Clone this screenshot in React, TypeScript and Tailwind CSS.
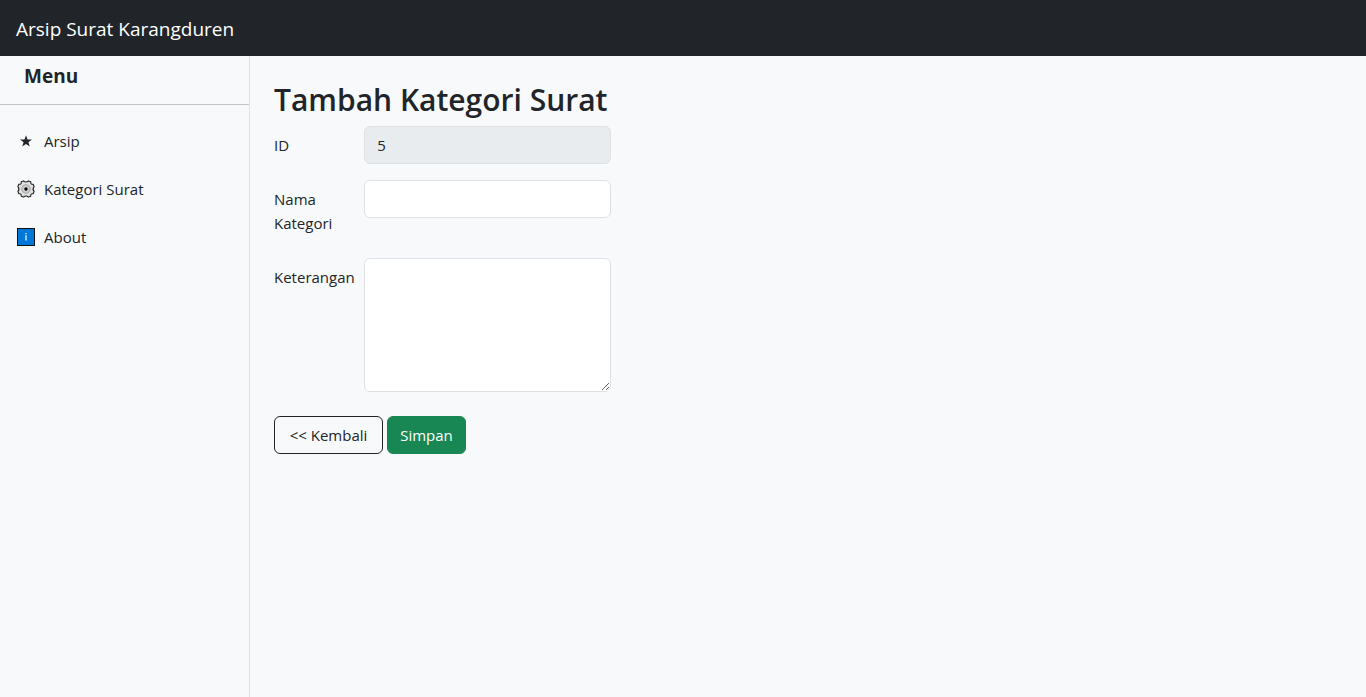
import type { ReactNode } from "react";

function StarIcon() {
  return (
    <svg viewBox="0 0 20 20" className="size-5" fill="#212529" aria-hidden="true">
      <path d="M10 4.2 11.5 8.6H16L12.4 11.3 13.8 15.6 10 12.9 6.2 15.6 7.6 11.3 4 8.6H8.5Z" />
    </svg>
  );
}

function GearIcon() {
  return (
    <svg viewBox="0 0 20 20" className="size-5" aria-hidden="true">
      <path
        d="M7.6 1.9 Q10 4 12.4 1.9 L14.8 2.8 Q14.4 5.6 17.2 5.2 L18.1 7.6 Q16 10 18.1 12.4 L17.2 14.8 Q14.4 14.4 14.8 17.2 L12.4 18.1 Q10 16 7.6 18.1 L5.2 17.2 Q5.6 14.4 2.8 14.8 L1.9 12.4 Q4 10 1.9 7.6 L2.8 5.2 Q5.6 5.6 5.2 2.8 Z"
        fill="#e0e0e0"
        stroke="#222"
        strokeWidth="1.1"
        strokeLinejoin="round"
      />
      <circle cx="10" cy="10" r="4.2" fill="#cfcfcf" stroke="#9a9a9a" strokeWidth="0.9" />
      <circle cx="10" cy="10" r="1.7" fill="#000" />
    </svg>
  );
}

function InfoIcon() {
  return (
    <svg viewBox="0 0 20 20" className="size-5" aria-hidden="true">
      <rect x="1.5" y="1.5" width="17" height="17" fill="#0078d7" stroke="#111" strokeWidth="1" />
      <path d="M9.4 8.2h1.2v5.3H9.4zM9.4 6h1.2v1.2H9.4z" fill="#fff" />
    </svg>
  );
}

function MenuLink({ icon, label }: { icon: ReactNode; label: string }) {
  return (
    <li>
      <a href="#" className="flex items-center gap-2 px-4 py-2 leading-6">
        {icon}
        {label}
      </a>
    </li>
  );
}

const control =
  "block w-full rounded-md border border-[#dee2e6] bg-white px-3 py-1.5 leading-6 read-only:bg-[#e9ecef]";
const label = "col-span-1 py-[7px] leading-6";

export default function App() {
  return (
    <div className="flex min-h-screen flex-col bg-[#f8f9fa] font-['Open_Sans',sans-serif] text-[15px] text-[#212529]">
      <header className="flex h-14 items-center bg-[#212529] px-4 pt-0.5">
        <a href="#" className="text-[19px] leading-7 text-white">
          Arsip Surat Karangduren
        </a>
      </header>
      <div className="flex grow">
        <aside className="w-[250px] shrink-0 border-r border-[#dee2e6]">
          <h2 className="px-6 pt-2 text-[19px] leading-6 font-bold">Menu</h2>
          <hr className="my-4 border-[#c2c4c6]" />
          <ul className="flex flex-col gap-2">
            <MenuLink icon={<StarIcon />} label="Arsip" />
            <MenuLink icon={<GearIcon />} label="Kategori Surat" />
            <MenuLink icon={<InfoIcon />} label="About" />
          </ul>
        </aside>
        <main className="grow py-6 pr-8 pl-6">
          <h1 className="pt-0.5 pb-2 text-[30px] leading-9 font-semibold">Tambah Kategori Surat</h1>
          <form className="flex flex-col gap-4">
            <div className="grid grid-cols-12 gap-x-6">
              <label htmlFor="id" className={label}>ID</label>
              <div className="col-span-3">
                <input id="id" type="text" readOnly value="5" className={control} />
              </div>
            </div>
            <div className="grid grid-cols-12 gap-x-6">
              <label htmlFor="nama" className={label}>Nama Kategori</label>
              <div className="col-span-3">
                <input id="nama" type="text" className={control} />
              </div>
            </div>
            <div className="grid grid-cols-12 gap-x-6">
              <label htmlFor="keterangan" className={label}>Keterangan</label>
              <div className="col-span-3">
                <textarea id="keterangan" rows={5} className={control} />
              </div>
            </div>
            <div className="flex gap-1 pt-2">
              <button type="button" className="min-w-[109px] rounded-md border border-[#212529] px-3 py-1.5 leading-6">
                &lt;&lt; Kembali
              </button>
              <button type="submit" className="min-w-[79px] rounded-md border border-[#198754] bg-[#198754] px-3 py-1.5 leading-6 text-white">
                Simpan
              </button>
            </div>
          </form>
        </main>
      </div>
    </div>
  );
}
